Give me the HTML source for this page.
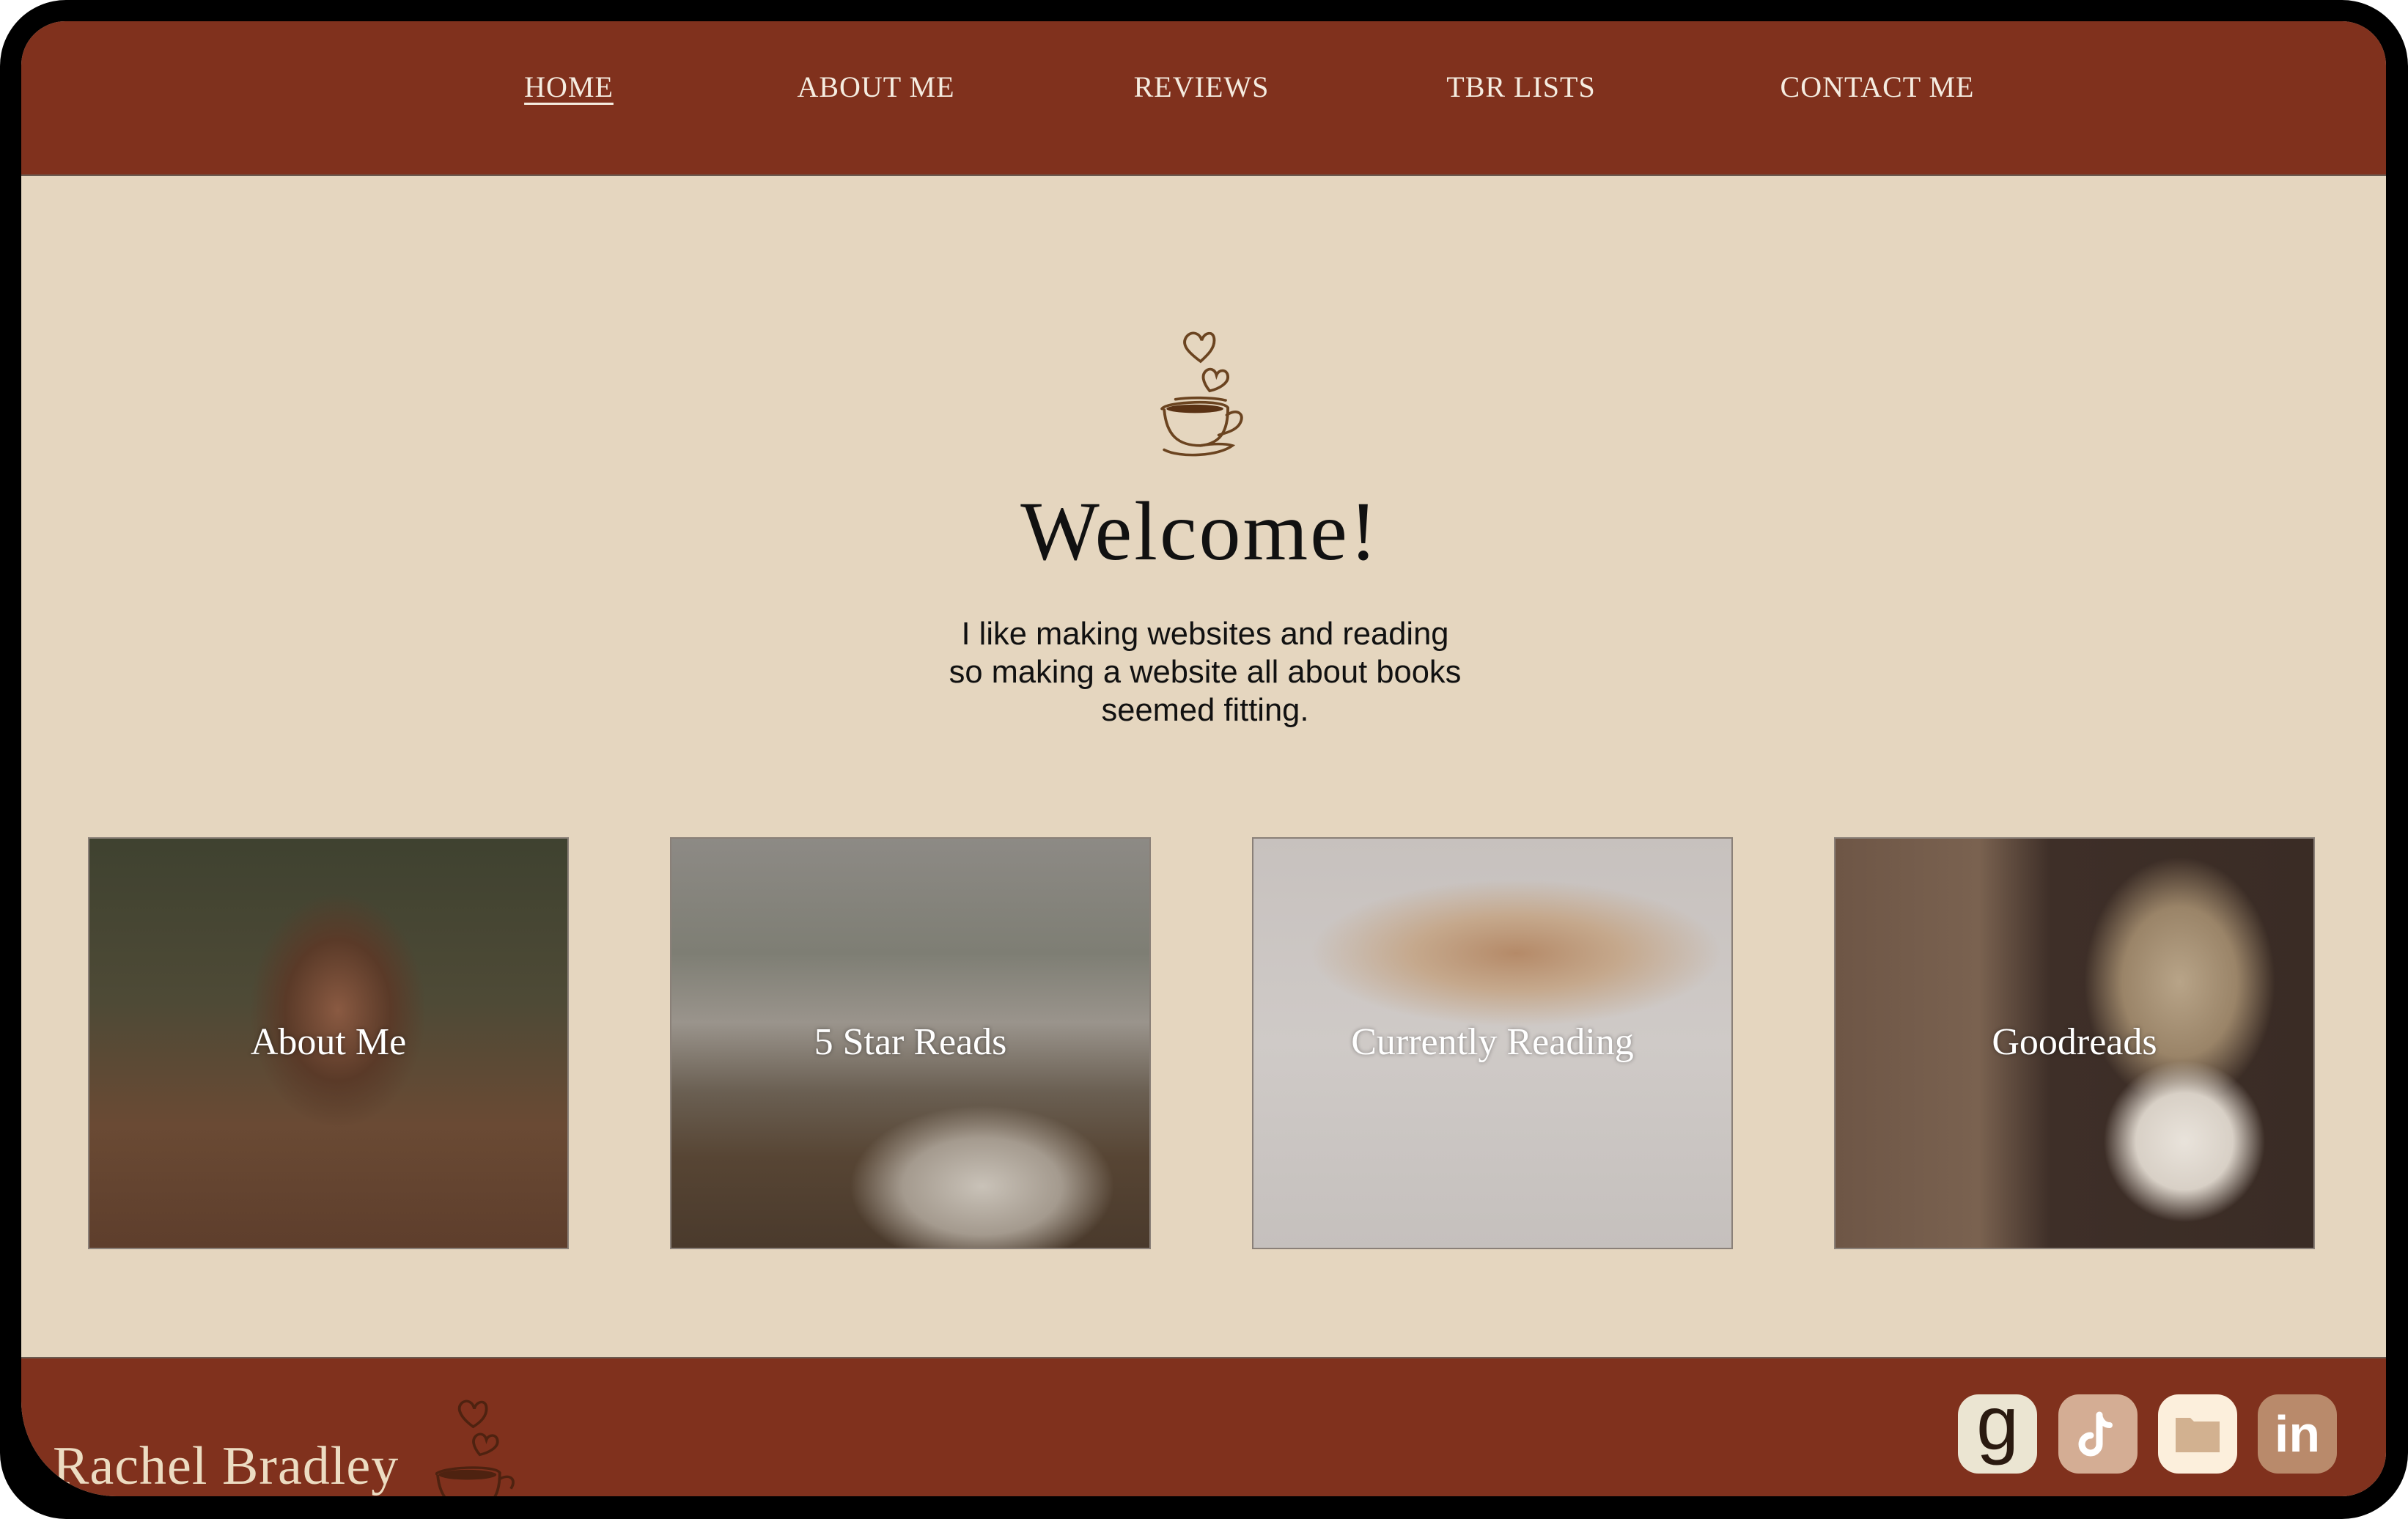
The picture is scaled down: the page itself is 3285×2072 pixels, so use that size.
<!DOCTYPE html>
<html><head><meta charset="utf-8"><style>
*{margin:0;padding:0;box-sizing:border-box}
html,body{width:3285px;height:2072px;overflow:hidden;background:#fff}
.frame{position:absolute;left:0;top:0;width:3285px;height:2072px;background:#000;border-radius:90px}
.screen{position:absolute;left:29px;top:29px;width:3226px;height:2012px;background:#e5d6bf;border-radius:60px 60px 60px 130px;overflow:hidden}
.hdr{position:absolute;left:0;top:0;width:100%;height:211px;background:#80311d;border-bottom:2px solid #6b5a50}
.nav{position:absolute;top:66px;font-family:"Liberation Serif",serif;font-size:40px;color:#f5ece0;transform:translateX(-50%);white-space:nowrap;letter-spacing:1px}
.nav.u{text-decoration:underline;text-underline-offset:8px;text-decoration-thickness:3px}
h1{position:absolute;left:0;width:100%;top:630px;text-align:center;font-family:"Liberation Serif",serif;font-weight:normal;font-size:114px;color:#111;letter-spacing:3px;padding-right:10px}
.p{position:absolute;left:0;width:100%;top:810px;text-align:center;font-family:"Liberation Sans",sans-serif;font-size:43.5px;line-height:52px;color:#111;padding-left:4px}
.card{position:absolute;top:1113px;width:656px;height:562px;border:2px solid #8a8078;overflow:hidden}
.card span{position:absolute;left:0;width:100%;top:248px;text-align:center;font-family:"Liberation Serif",serif;font-size:52px;color:#fff;text-shadow:0 0 6px rgba(0,0,0,.4)}
.ftr{position:absolute;left:0;top:1822px;width:100%;height:200px;background:#80311d;border-top:2px solid #6b5a50}
.name{position:absolute;left:43px;top:105px;font-family:"Liberation Serif",serif;font-size:74px;color:#ecdcc2;letter-spacing:1px}
.ic{position:absolute;top:49px;width:108px;height:108px;border-radius:28px}
</style></head><body>
<div class="frame"></div>
<div class="screen">
 <div class="hdr">
  <div class="nav u" style="left:747px">HOME</div>
  <div class="nav" style="left:1166px">ABOUT ME</div>
  <div class="nav" style="left:1610px">REVIEWS</div>
  <div class="nav" style="left:2046px">TBR LISTS</div>
  <div class="nav" style="left:2532px">CONTACT ME</div>
 </div>
 <svg style="position:absolute;left:1553px;top:421px" width="121" height="175" viewBox="4 4 78 122" preserveAspectRatio="none" fill="none" stroke="#6b4420" stroke-width="2.5" stroke-linecap="round">
  <path d="M40 34 C30 26 22 18 28 10 C33 4 40 8 41 14 C43 6 52 4 52 14 C52 22 46 28 40 34 Z"/>
  <path d="M48 62 C42 54 40 46 46 42 C50 40 53 43 54 47 C56 41 64 41 64 49 C64 55 56 60 48 62 Z"/>
  <path d="M18 70 C30 68 50 68 62 71"/>
  <path d="M6 79 C10 72 60 70 64 78 C64 100 58 112 40 114 C20 114 10 104 8 80"/>
  <ellipse cx="35" cy="79" rx="25" ry="4" fill="#5a3214" stroke="none"/>
  <path d="M63 85 C72 78 80 84 74 94 C70 100 62 102 56 104"/>
  <path d="M8 118 C22 126 56 124 68 114 C62 112 50 112 40 114"/>
 </svg>
 <h1>Welcome!</h1>
 <div class="p">I like making websites and reading<br>so making a website all about books<br>seemed fitting.</div>

 <div class="card" style="left:91px;background:radial-gradient(ellipse 120px 160px at 52% 42%,#8a5a42 0%,#5a3a28 60%,transparent 100%),linear-gradient(180deg,#3f4230 0%,#4e4a36 40%,#6a4a34 70%,#5e3e2c 100%)"><span>About Me</span></div>
 <div class="card" style="left:885px;background:radial-gradient(ellipse 180px 110px at 65% 85%,#c9c2b8 0%,#a49a8e 60%,transparent 100%),linear-gradient(180deg,#8d8a85 0%,#7e7e74 28%,#9a948c 45%,#6a5f52 62%,#574534 78%,#4a3a2c 100%)"><span>5 Star Reads</span></div>
 <div class="card" style="left:1679px;background:radial-gradient(ellipse 280px 100px at 55% 28%,#b58a68 0%,#c5a88c 50%,transparent 100%),linear-gradient(180deg,#c7c1be 0%,#cfcac7 50%,#c5c0bd 100%)"><span>Currently Reading</span></div>
 <div class="card" style="left:2473px;background:radial-gradient(ellipse 110px 110px at 73% 74%,#e9e3db 0%,#d8d0c6 60%,transparent 100%),radial-gradient(ellipse 130px 170px at 72% 35%,#b8a488 0%,#9a8468 60%,transparent 100%),linear-gradient(90deg,#6e5646 0%,#7a6250 30%,#3e2f28 45%,#3a2c25 100%)"><span>Goodreads</span></div>

 <div class="ftr">
  <div class="name">Rachel Bradley</div>
  <svg style="position:absolute;left:565px;top:55px" width="115" height="150" viewBox="4 4 76 110" preserveAspectRatio="none" fill="none" stroke="#4e2210" stroke-width="2.5">
   <path d="M38 32 C28 24 22 14 28 8 C33 4 38 8 39 14 C41 6 50 4 50 14 C50 22 44 28 38 32Z"/>
   <path d="M44 60 C38 52 36 44 42 40 C46 38 49 41 50 45 C52 39 60 39 60 47 C60 53 52 58 44 60Z"/>
   <path d="M4 80 C8 72 58 70 62 78 C62 100 56 112 38 114 C18 114 8 104 6 80"/>
   <ellipse cx="33" cy="80" rx="26" ry="5" fill="#4e2210" stroke="none"/>
   <path d="M61 85 C70 78 78 84 72 94"/>
  </svg>
  <div class="ic" style="left:2642px;background:#ebe5d2;font-family:'Liberation Sans',sans-serif;font-size:104px;line-height:80px;text-align:center;color:#2a1a10">g</div>
  <div class="ic" style="left:2779px;background:#d4ad94">
   <svg width="108" height="108" viewBox="0 0 108 108"><path d="M56 28 L56 68 A12 12 0 1 1 44 56" fill="none" stroke="#fff" stroke-width="9" stroke-linecap="round"/><path d="M56 28 C58 38 64 42 70 42" fill="none" stroke="#fff" stroke-width="8" stroke-linecap="round"/></svg>
  </div>
  <div class="ic" style="left:2915px;background:#fcefdc">
   <svg width="108" height="108" viewBox="0 0 108 108"><path d="M24 32 H44 L49 37 H84 V79 H24 Z" fill="#d2b190"/></svg>
  </div>
  <div class="ic" style="left:3051px;background:#b98a6b;font-family:'Liberation Sans',sans-serif;font-weight:bold;font-size:70px;line-height:108px;text-align:center;color:#fff">in</div>
 </div>
</div>
</body></html>
